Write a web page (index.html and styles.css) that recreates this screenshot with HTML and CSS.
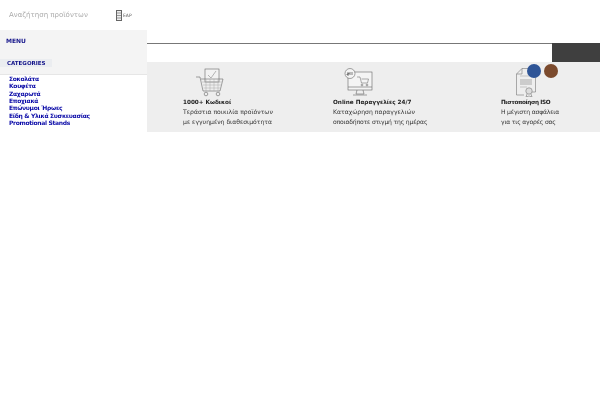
FILE: index.html
```html
<!DOCTYPE html>
<html lang="el">
<head>
<meta charset="utf-8">
<title>Προϊόντα</title>
<link rel="stylesheet" href="styles.css">
</head>
<body>
<div class="page">
  <aside class="side">
    <div class="search">
      <span class="search-text">Αναζήτηση προϊόντων</span>
      <span class="lang">
        <svg class="lang-icon" width="6" height="11" viewBox="0 0 6 11"><rect x="0.5" y="0.5" width="5" height="10" fill="#eee" stroke="#666"/><path d="M1 3h4M1 5.5h4M1 8h4" stroke="#999"/></svg>EAP
      </span>
    </div>
    <div class="panel">
      <div class="menu-title">MENU</div>
      <div class="cat-title">CATEGORIES</div>
    </div>
    <ul class="cats">
      <li>Σοκολάτα</li>
      <li>Κουφέτα</li>
      <li>Ζαχαρωτά</li>
      <li>Εποχιακά</li>
      <li>Επώνυμοι Ήρωες</li>
      <li>Είδη &amp; Υλικά Συσκευασίας</li>
      <li>Promotional Stands</li>
    </ul>
  </aside>
  <main class="main">
    <div class="bar"><div class="bar-dark"></div></div>
    <section class="features">
      <article class="feat feat-a">
        <svg class="ico ico-a" width="28" height="29" viewBox="0 0 28 29" fill="none" stroke="#666" stroke-width="0.6">
          <rect x="9" y="1" width="14" height="13" fill="#f2f2f2"/>
          <path d="M12 7l3 3 5-7" stroke="#888"/>
          <path d="M0 9h4l3 14h17l3-12H5"/>
          <path d="M6 14h20M7 17h18M7.500 20h17M10 11v12M14 11v12M18 11v12M22 11v12" stroke="#aaa" stroke-width="0.5"/>
          <circle cx="10" cy="26" r="1.800"/><circle cx="22" cy="26" r="1.800"/>
        </svg>
        <h3 class="feat-title">1000+ Κωδικοί</h3>
        <p class="feat-text">Τεράστια ποικιλία προϊόντων</p>
        <p class="feat-text">με εγγυημένη διαθεσιμότητα</p>
      </article>
      <article class="feat feat-b">
        <svg class="ico ico-b" width="29" height="29" viewBox="0 0 29 29" fill="none" stroke="#666" stroke-width="0.6">
          <rect x="4" y="4" width="24" height="18" fill="#f4f4f4"/>
          <path d="M4 19h24M13 22l-1 4h8l-1-4M9 27h14"/>
          <circle cx="6" cy="5.500" r="5" fill="#f4f4f4"/>
          <path d="M13 9h3l1.500 6h6l1-4h-7" stroke="#777"/>
          <circle cx="18" cy="17" r="0.900"/><circle cx="23" cy="17" r="0.900"/>
          <path d="M3 5h2v1H3v1h2M6 4v3M8 4v3" stroke="#333" stroke-width="0.6"/>
        </svg>
        <h3 class="feat-title">Online Παραγγελίες 24/7</h3>
        <p class="feat-text">Καταχώρηση παραγγελιών</p>
        <p class="feat-text feat-text-tight">οποιαδήποτε στιγμή της ημέρας</p>
      </article>
      <article class="feat feat-c">
        <svg class="ico ico-c" width="20" height="29" viewBox="0 0 20 29" fill="none" stroke="#777" stroke-width="0.6">
          <path d="M0.500 6L6 0.500H19.500V24H13M8 27H0.500V6H6V0.500"/>
          <rect x="4" y="11" width="12" height="6" fill="#ccc" stroke="none"/>
          <path d="M4 8h12M4 19h7" stroke="#aaa"/>
          <circle cx="13" cy="23" r="3.200" fill="#ddd"/>
          <path d="M11 26l-1 3 3-1 3 1-1-3"/>
        </svg>
        <h3 class="feat-title">Πιστοποίηση ISO</h3>
        <p class="feat-text">Η μέγιστη ασφάλεια</p>
        <p class="feat-text">για τις αγορές σας</p>
      </article>
      <span class="dot dot-blue"></span>
      <span class="dot dot-brown"></span>
    </section>
  </main>
</div>
</body>
</html>
```
FILE: styles.css
```css
* { box-sizing: border-box; }
html, body { margin: 0; padding: 0; background: #fff; }
body { width: 600px; height: 400px; overflow: hidden; font-family: "DejaVu Sans", sans-serif; }
.page { display: grid; grid-template-columns: 147px 1fr; align-items: start; will-change: transform; }

.side { display: flex; flex-direction: column; }
.search { height: 30px; display: flex; align-items: center; padding-left: 9px; }
.search-text { width: 107px; font-size: 7px; color: #aaa; white-space: nowrap; }
.lang { display: flex; align-items: center; font-size: 4.500px; color: #666; }
.lang-icon { display: block; margin-right: 1px; }

.panel { height: 45px; background: #f4f4f4; padding: 6px 0 0; border-bottom: 1px solid #e6e6e6; }
.menu-title { font-size: 6px; font-weight: bold; line-height: 9px; color: #14148a; padding-left: 6px; }
.cat-title { display: block; margin-top: 14px; width: 52px; height: 8px; background: #ebedf0; font-size: 5.500px; font-weight: bold; line-height: 8px; color: #14148a; padding-left: 7px; white-space: nowrap; }

.cats { list-style: none; margin: 0; padding: 0 0 0 9px; }
.cats li { font-size: 6px; font-weight: bold; letter-spacing: -0.320px; line-height: 7.330px; color: #0b0ba8; white-space: nowrap; }

.main { display: flex; flex-direction: column; padding-top: 43px; }
.bar { height: 19px; border-top: 1px solid #777; display: flex; justify-content: flex-end; }
.bar-dark { width: 48px; height: 19px; margin-top: -1px; background: #3f3f3f; }

.features { position: relative; height: 70px; background: #eeeeee; display: grid; grid-template-columns: 150px 168px 1fr; padding-left: 36px; padding-top: 6px; }
.feat { display: flex; flex-direction: column; min-width: 0; }
.ico { display: block; height: 29px; margin-bottom: 1px; }
.ico-a { margin-left: 13px; }
.ico-b { margin-left: 11px; }
.ico-c { margin-left: 15px; }
.feat-title { margin: 0; font-size: 5.700px; font-weight: bold; line-height: 9px; color: #222; white-space: nowrap; }
.feat-text { margin: 0; font-size: 6.100px; line-height: 10px; color: #333; white-space: nowrap; }
.feat-text-tight { letter-spacing: -0.180px; }
.feat-c .feat-title { letter-spacing: -0.400px; }
.feat-c .feat-text { letter-spacing: -0.200px; }
.dot { position: absolute; top: 2px; width: 14px; height: 14px; border-radius: 50%; }
.dot-blue { left: 380px; background: #2f5597; }
.dot-brown { left: 397px; background: #7b4a2d; }
```
